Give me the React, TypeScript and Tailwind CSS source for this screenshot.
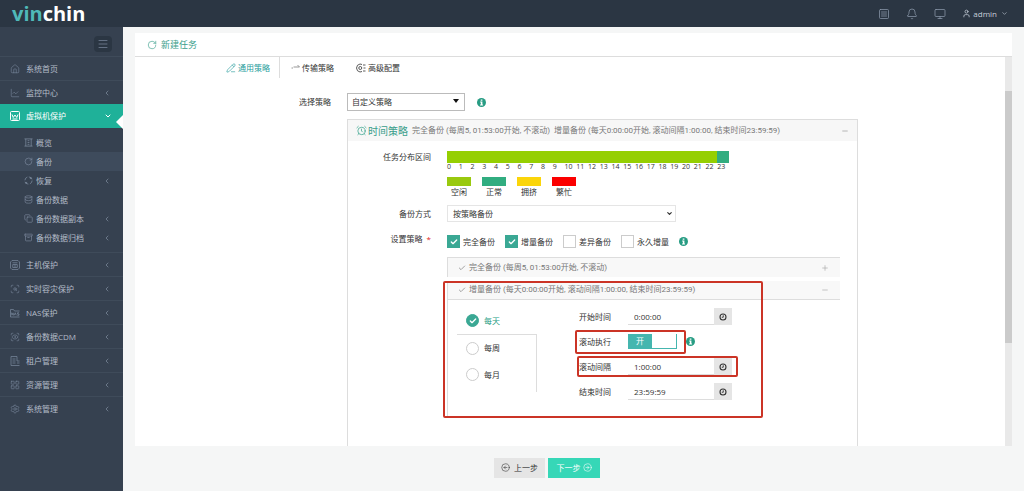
import { useState, type ComponentType, type ReactNode } from "react";
import {
  AlarmClock,
  Archive,
  Bell,
  Check,
  ChevronDown,
  ChevronLeft,
  CircleArrowLeft,
  CircleArrowRight,
  Copy,
  Database,
  House,
  LayoutGrid,
  LineChart,
  Menu,
  Minus,
  Monitor,
  PencilLine,
  Plus,
  RotateCw,
  ScanEye,
  ScanSearch,
  Settings,
  SquareMenu,
  User,
} from "lucide-react";

type IconProps = { className?: string; strokeWidth?: number };
type MenuItem = { label: string; icon: ComponentType<IconProps>; arrow?: boolean };

// Small line icons on a 20px grid that the icon set has no match for.
function LineIcon({ d, className, strokeWidth = 1.5 }: IconProps & { d: string }) {
  return (
    <svg viewBox="0 0 20 20" className={className} fill="none" stroke="currentColor" strokeWidth={strokeWidth} aria-hidden>
      <path d={d} />
    </svg>
  );
}

const HostIcon = (props: IconProps) => (
  <LineIcon d="M4 1h12l3 3v12l-3 3H4l-3-3V4zM5 5.5h10M5.500 9h9v6h-9zM10 9v6" {...props} />
);
const NasIcon = (props: IconProps) => (
  <LineIcon d="M1 18V3h6l2 3h10M1 18h18M3.500 14.500v-5l3 5v-5M8.500 14.500l2-5 2 5M18 9.500h-3V12h3v2.500h-3.500" {...props} />
);
const TenantIcon = (props: IconProps) => (
  <LineIcon d="M14 1H2v18h17M14 1v9M5 6h6M5 10h6M5 14h6M14 14h5M14 10h5" {...props} />
);
const OverviewIcon = (props: IconProps) => (
  <LineIcon d="M1 2h18M1 18h18M4 2v16M16 2v16M8 6h4M8 10h4M8 14h4" {...props} />
);
const RestoreIcon = ({ className, strokeWidth }: IconProps) => (
  <svg viewBox="0 0 20 20" className={className} fill="none" stroke="currentColor" strokeWidth={strokeWidth} aria-hidden>
    <circle cx="10" cy="10" r="8" strokeDasharray="9 3.500" />
    <path d="M14 2l3 3-4 1M6 18l-3-3 4-1" />
  </svg>
);

const topMenu: MenuItem[] = [
  { label: "系统首页", icon: House },
  { label: "监控中心", icon: LineChart, arrow: true },
];

const subMenu: MenuItem[] = [
  { label: "概览", icon: OverviewIcon },
  { label: "备份", icon: RotateCw },
  { label: "恢复", icon: RestoreIcon, arrow: true },
  { label: "备份数据", icon: Database },
  { label: "备份数据副本", icon: Copy, arrow: true },
  { label: "备份数据归档", icon: Archive, arrow: true },
];

const bottomMenu: MenuItem[] = [
  { label: "主机保护", icon: HostIcon, arrow: true },
  { label: "实时容灾保护", icon: ScanSearch, arrow: true },
  { label: "NAS保护", icon: NasIcon, arrow: true },
  { label: "备份数据CDM", icon: ScanEye, arrow: true },
  { label: "租户管理", icon: TenantIcon, arrow: true },
  { label: "资源管理", icon: LayoutGrid, arrow: true },
  { label: "系统管理", icon: Settings, arrow: true },
];

const hours = Array.from({ length: 24 }, (_, i) => i);

const legend = [
  { label: "空闲", color: "bg-[#99c90f]" },
  { label: "正常", color: "bg-[#31ad80]" },
  { label: "拥挤", color: "bg-[#fbd50a]" },
  { label: "繁忙", color: "bg-[#fb0000]" },
];

const strategies = ["完全备份", "增量备份", "差异备份", "永久增量"];
const periods = ["每天", "每周", "每月"];

// Solid round "i" badge used next to fields with help text.
function InfoBadge() {
  return (
    <svg viewBox="0 0 16 16" className="size-[9px] shrink-0" aria-hidden>
      <circle cx="8" cy="8" r="8" fill="#279c83" />
      <path d="M6.6 2.6h3v2.5h-3zM5.6 6.4h4v5.2h1.2v1.8H5.4v-1.8h1.4V8.2H5.6z" fill="#fff" />
    </svg>
  );
}

// Clock glyph on the time picker buttons.
function ClockGlyph() {
  return (
    <svg viewBox="0 0 16 16" className="size-2" fill="none" stroke="#333" strokeWidth="2.2" aria-hidden>
      <circle cx="8" cy="8" r="6" />
      <path d="M8.500 4.500V8.500H5.500" strokeWidth="1.800" />
    </svg>
  );
}

function SideItem({ item }: { item: MenuItem }) {
  const Icon = item.icon;
  return (
    <li>
      <a
        href="#"
        className="flex h-6 items-center border-t border-[#3f4b5a] pr-3 pl-[10px] text-[#b4bcc8]"
      >
        <Icon className="size-[10px] text-[#77859a]" strokeWidth={1.5} />
        <span className="ml-[6px] flex-1 whitespace-nowrap">{item.label}</span>
        {item.arrow ? <ChevronLeft className="size-2 text-[#8592a5]" /> : null}
      </a>
    </li>
  );
}

function FieldRow({ label, children, className = "" }: { label: ReactNode; children: ReactNode; className?: string }) {
  return (
    <div className={`flex gap-4 ${className}`}>
      <div className="w-[83px] shrink-0 text-right leading-3">{label}</div>
      <div className="min-w-0 flex-1">{children}</div>
    </div>
  );
}

function TimeField({ id, label, value }: { id: string; label: string; value: string }) {
  return (
    <div className="flex h-[17px] items-center">
      <label htmlFor={id} className="w-[49px]">
        {label}
      </label>
      <input
        id={id}
        defaultValue={value}
        className="h-full w-[86px] border-b border-[#ddd] bg-white px-[6px] outline-none"
      />
      <button type="button" aria-label={label} className="flex h-full w-[18px] items-center justify-center bg-[#e5e5e5]">
        <ClockGlyph />
      </button>
    </div>
  );
}

function Sidebar() {
  return (
    <nav className="w-[123px] shrink-0 bg-[#364150]">
      <div className="flex h-[29px] items-center justify-end pr-[11px]">
        <button
          type="button"
          aria-label="菜单"
          className="mt-1 flex h-4 w-[18px] items-center justify-center rounded-sm bg-[#2b3643]"
        >
          <Menu className="size-3 text-[#78869a]" strokeWidth={1.5} />
        </button>
      </div>
      <ul>
        {topMenu.map((item) => (
          <SideItem key={item.label} item={item} />
        ))}
        <li>
          <a href="#" className="relative flex h-6 items-center bg-[#1fb199] pr-[11px] pl-[10px] text-white">
            <svg viewBox="0 0 20 20" className="size-[10px]" fill="none" stroke="currentColor" strokeWidth="2" aria-hidden>
              <rect x="1" y="1" width="18" height="18" rx="2" />
              <path d="M4 7l2.500 6L10 8l3.500 5L16 7M5 16h10" />
            </svg>
            <span className="ml-[6px] flex-1">虚拟机保护</span>
            <ChevronDown className="size-2" strokeWidth={3} />
            <svg viewBox="0 0 7 14" className="absolute right-0 bottom-[-1px] h-[14px] w-[7px]" aria-hidden>
              <path d="M7 0v14L0 7z" fill="#fff" />
            </svg>
          </a>
          <ul className="py-[5px]">
            {subMenu.map((item) => {
              const Icon = item.icon;
              return (
                <li key={item.label}>
                  <a
                    href="#"
                    className={`flex h-[19px] items-center pr-3 pl-6 text-[#b4bcc8] ${item.label === "备份" ? "bg-[#3e4b5c]" : ""}`}
                  >
                    <Icon className="size-[9px] text-[#8593a7]" strokeWidth={1.5} />
                    <span className="ml-[3px] flex-1 whitespace-nowrap">{item.label}</span>
                    {item.arrow ? <ChevronLeft className="size-2 text-[#8592a5]" /> : null}
                  </a>
                </li>
              );
            })}
          </ul>
        </li>
        {bottomMenu.map((item) => (
          <SideItem key={item.label} item={item} />
        ))}
      </ul>
    </nav>
  );
}

function IncrementalPanel() {
  const [period, setPeriod] = useState("每天");

  return (
    <section className="relative mt-1 border-l border-[#ddd]">
      <h3 className="flex h-[19px] items-center border-b border-[#ddd] bg-[#f8f8f8] pr-[11px] pl-[10px] text-[#777]">
        <Check className="size-2" />
        <span className="ml-[3px] flex-1 font-[Roboto,'Noto_Sans_CJK_SC',sans-serif]">
          增量备份 (每天0:00:00开始, 滚动间隔1:00:00, 结束时间23:59:59)
        </span>
        <Minus className="size-2 text-[#aaa]" />
      </h3>

      <div className="flex h-[118px] items-start pl-[9px]">
        <div className="w-20 pt-[7px]">
          {periods.map((name, i) => (
            <label
              key={name}
              className={`flex h-[27px] items-center gap-[5px] pl-[9px] ${period === name ? "text-[#279c83]" : ""} ${i > 0 ? "border-r border-[#ddd]" : ""} ${i === 1 ? "border-t" : ""}`}
            >
              <input
                type="radio"
                name="period"
                checked={period === name}
                onChange={() => setPeriod(name)}
                className="peer sr-only"
              />
              <span className="flex size-[13px] items-center justify-center rounded-full border border-[#ccc] text-transparent peer-checked:border-[#3aa894] peer-checked:bg-[#3aa894] peer-checked:text-white">
                <Check className="size-2" strokeWidth={4} />
              </span>
              {name}
            </label>
          ))}
          <div className="h-1 border-r border-[#ddd]" />
        </div>

        <div className="ml-[42px] flex flex-col gap-2 pt-2">
          <TimeField id="start" label="开始时间" value="0:00:00" />
          <div className="flex h-[17px] items-center">
            <span className="w-[49px]">滚动执行</span>
            <button
              type="button"
              role="switch"
              aria-checked="true"
              aria-label="滚动执行"
              className="flex h-[15px] w-[49px] border-r border-b border-[#45b6af] bg-white text-white"
            >
              <span className="flex h-full w-6 items-center justify-center bg-[#45b6af]">开</span>
            </button>
            <span className="ml-[9px]">
              <InfoBadge />
            </span>
          </div>
          <TimeField id="interval" label="滚动间隔" value="1:00:00" />
          <TimeField id="end" label="结束时间" value="23:59:59" />
        </div>
      </div>

      {/* Highlight frames drawn over the form */}
      <div className="pointer-events-none absolute inset-y-0 left-[-5px] w-80 rounded-xs border-2 border-[#cb3426]" />
      <div className="pointer-events-none absolute top-[49px] left-[127px] h-6 w-[111px] rounded-xs border-2 border-[#cb3426]" />
      <div className="pointer-events-none absolute top-[75px] left-[129px] h-[21px] w-[161px] rounded-xs border-2 border-[#cb3426]" />
    </section>
  );
}

function TimePolicy() {
  return (
    <section className="flex-1 border border-b-0 border-[#ddd]">
      <h2 className="flex h-[21px] items-center bg-[#f7f7f7] pr-2 pl-2">
        <AlarmClock className="size-[11px] text-[#279c83]" strokeWidth={1.5} />
        <span className="ml-[1px] text-[10px] text-[#3a9e8b]">时间策略</span>
        <span className="ml-1 flex-1 font-[Roboto,'Noto_Sans_CJK_SC',sans-serif] whitespace-pre text-[#777]">
          完全备份 (每周5, 01:53:00开始, 不滚动)  增量备份 (每天0:00:00开始, 滚动间隔1:00:00, 结束时间23:59:59)
        </span>
        <Minus className="size-2 text-[#999]" />
      </h2>

      <FieldRow label="任务分布区间" className="pt-[10px]">
        <div className="w-[282px]">
          <div className="flex h-3">
            <span className="flex-23 bg-[#95cf02]" />
            <span className="flex-1 bg-[#31ad80]" />
          </div>
          <div className="grid grid-cols-24 text-[7px] leading-2">
            {hours.map((hour) => (
              <span key={hour}>{hour}</span>
            ))}
          </div>
        </div>
        <ul className="mt-[6px] flex gap-[11px]">
          {legend.map((item) => (
            <li key={item.label} className="w-6 text-center leading-3">
              <span className={`block h-[9px] ${item.color}`} />
              {item.label}
            </li>
          ))}
        </ul>
      </FieldRow>

      <FieldRow label={<label htmlFor="mode">备份方式</label>} className="mt-[7px] items-center">
        <div className="relative w-[229px]">
          <select
            id="mode"
            className="block h-[17px] w-full appearance-none border border-[#e5e5e5] bg-white px-[5px] outline-none"
          >
            <option>按策略备份</option>
          </select>
          <ChevronDown className="pointer-events-none absolute top-[5px] right-[3px] size-[7px]" strokeWidth={4} />
        </div>
      </FieldRow>

      <FieldRow
        label={
          <>
            设置策略 <span className="ml-[2px] text-[#e02222]">*</span>
          </>
        }
        className="mt-[11px]"
      >
        <div className="mt-[2px] flex items-center">
          {strategies.map((name, i) => (
            <label key={name} className="flex w-[58px] items-center gap-[3px] whitespace-nowrap">
              <input type="checkbox" defaultChecked={i < 2} className="peer sr-only" />
              <span className="flex size-[13px] items-center justify-center border border-[#ccc] text-transparent peer-checked:border-[#3aa894] peer-checked:bg-[#3aa894] peer-checked:text-white">
                <Check className="size-2" strokeWidth={4} />
              </span>
              {name}
            </label>
          ))}
          <InfoBadge />
        </div>

        <div className="mt-[9px] mr-[17px]">
          <h3 className="flex h-5 items-center border-t border-l border-[#ddd] bg-[#f8f8f8] pr-[11px] pl-[10px] text-[#777]">
            <Check className="size-2" />
            <span className="ml-[3px] flex-1 font-[Roboto,'Noto_Sans_CJK_SC',sans-serif]">
              完全备份 (每周5, 01:53:00开始, 不滚动)
            </span>
            <Plus className="size-2 text-[#aaa]" />
          </h3>
          <IncrementalPanel />
        </div>
      </FieldRow>
    </section>
  );
}

export default function App() {
  return (
    <div className="flex h-screen flex-col overflow-hidden bg-[#f5f6f6] font-['Open_Sans','Noto_Sans_CJK_SC',sans-serif] text-[8px] leading-3 text-[#333]">
      <header className="flex h-[27px] shrink-0 items-center bg-[#2b3643] pr-4 pl-3">
        <a href="#" className="flex-1 text-[20px] leading-6 font-bold text-white">
          <span className="text-[#4fb9b9]">vin</span>chin
        </a>
        <div className="flex items-center text-[#8b98a9]">
          <SquareMenu className="size-3" strokeWidth={1.5} />
          <Bell className="ml-4 size-3" strokeWidth={1.5} />
          <Monitor className="ml-4 size-3" strokeWidth={1.5} />
          <a href="#" className="ml-4 flex items-center text-[#c6cfda]">
            <User className="size-[9px]" />
            <span className="ml-[2px]">admin</span>
            <ChevronDown className="ml-1 size-[7px]" />
          </a>
        </div>
      </header>

      <div className="flex min-h-0 flex-1">
        <Sidebar />

        <main className="flex min-w-0 flex-1 flex-col px-3 pt-[6px]">
          <div className="flex min-h-0 flex-1 flex-col bg-white">
            <h1 className="flex h-6 shrink-0 items-center border-b border-[#ddd] pl-3 text-[9px] text-[#3a9e8b]">
              <RotateCw className="size-[10px]" strokeWidth={1.5} />
              <span className="ml-1">新建任务</span>
            </h1>

            <div className="flex min-h-0 flex-1">
              <form className="flex min-w-0 flex-1 flex-col overflow-hidden">
                <div role="tablist" className="ml-20 flex h-[21px] shrink-0">
                  <button type="button" role="tab" className="flex items-center border-r border-[#ddd] pr-[9px] pl-[11px] text-[#279c9c]">
                    <PencilLine className="mr-[2px] size-[10px]" strokeWidth={1.5} />
                    通用策略
                  </button>
                  <button type="button" role="tab" className="flex items-center px-[11px]">
                    <svg viewBox="0 0 18 18" className="mr-[2px] size-[9px]" fill="none" stroke="#777" strokeWidth="1.500" aria-hidden>
                      <path d="M1 10h3M5 8h12l-4-4" />
                    </svg>
                    传输策略
                  </button>
                  <button type="button" role="tab" className="flex items-center px-[11px]">
                    <svg viewBox="0 0 20 20" className="mr-[2px] size-[10px]" fill="none" stroke="currentColor" strokeWidth="1.600" aria-hidden>
                      <path d="M12 3L8 2 3 4.500 1 10l2 5.500L8 18l4-1M14 4h5M15 10h4M14 16h5" />
                      <circle cx="8.500" cy="10" r="3" />
                    </svg>
                    高级配置
                  </button>
                </div>

                <div className="mt-[15px] flex shrink-0 items-center gap-4">
                  <label htmlFor="policy" className="w-[196px] text-right">
                    选择策略
                  </label>
                  <div className="relative w-[118px]">
                    <select
                      id="policy"
                      className="block h-[18px] w-full appearance-none border border-[#bbb] bg-white px-1 outline-none"
                    >
                      <option>自定义策略</option>
                    </select>
                    <svg viewBox="0 0 6 4" className="pointer-events-none absolute top-[6px] right-[6px] h-1 w-[6px]" aria-hidden>
                      <path d="M0 0h6L3 4z" fill="#111" />
                    </svg>
                  </div>
                  <span className="-ml-1">
                    <InfoBadge />
                  </span>
                </div>

                <div className="mt-2 mr-[147px] ml-[212px] flex flex-1">
                  <TimePolicy />
                </div>
              </form>

              {/* Scroll track */}
              <div className="w-[7px] bg-[#e9e9e9] pt-[34px]">
                <div className="h-[71%] bg-[#cbcbcb]" />
              </div>
            </div>
          </div>

          <footer className="flex h-[45px] shrink-0 items-center justify-center gap-[3px] pr-[53px] pb-[2px]">
            <button type="button" className="flex h-5 w-[51px] items-center justify-center gap-1 bg-[#e5e5e5]">
              <CircleArrowLeft className="size-[9px]" strokeWidth={1.5} />
              上一步
            </button>
            <button type="button" className="flex h-5 w-[52px] items-center justify-center gap-[2px] bg-[#36d7b7] text-white">
              下一步
              <CircleArrowRight className="size-[9px]" strokeWidth={1.5} />
            </button>
          </footer>
        </main>
      </div>
    </div>
  );
}
